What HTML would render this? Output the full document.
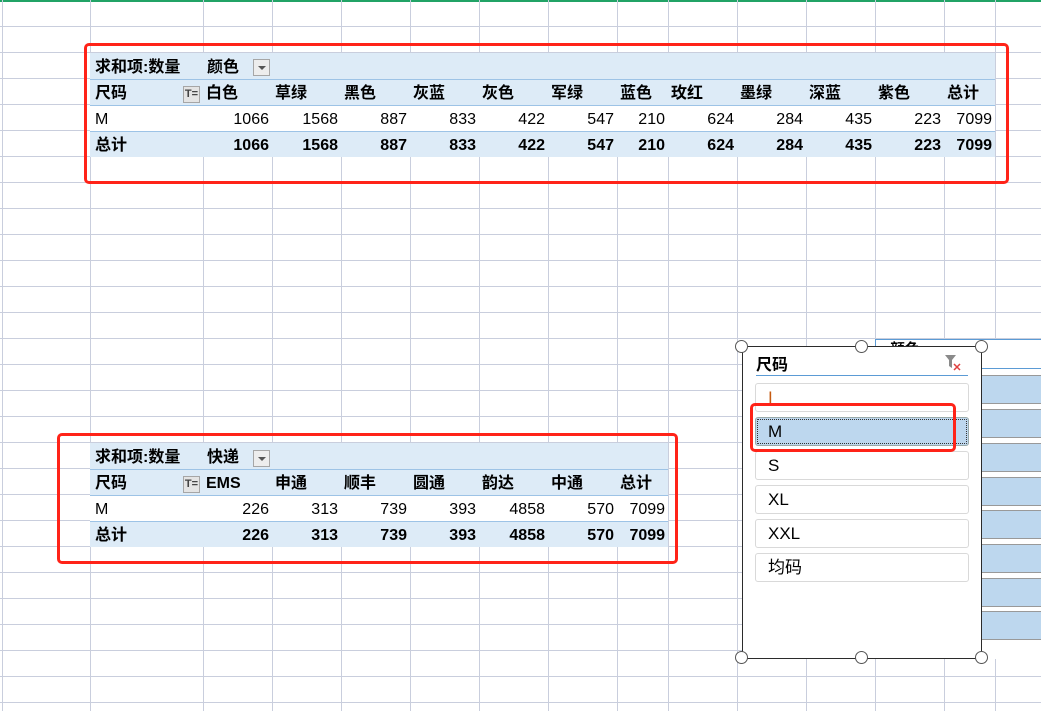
<!DOCTYPE html>
<html><head><meta charset="utf-8"><style>
*{margin:0;padding:0;box-sizing:border-box}
body{width:1041px;height:711px;overflow:hidden;background:#fff;position:relative;font-family:"Liberation Sans","Noto Sans CJK SC",sans-serif;font-size:16px;color:#000}
.v{position:absolute;top:0;height:711px;width:1px;background:#C9CEDD}
.h{position:absolute;left:0;width:1041px;height:1px;background:#C9CEDD}
table{position:absolute;border-collapse:collapse;table-layout:fixed}
td{height:26px;padding:0 3px 1px 3px;white-space:nowrap;overflow:visible;border-bottom:1px solid #9DC3E6;vertical-align:bottom;line-height:20px}
tr.b td{background:#DDEBF7}
tr.w td{background:#fff}
tr.t td{border-bottom:none}
td.r{text-align:right}
.bold td{font-weight:bold}
.dd{position:absolute;width:17px;height:17px;border:1px solid #A6A6A6;background:#EDEDED}
.dd:after{content:"";position:absolute;left:4px;top:6px;border-left:4px solid transparent;border-right:4px solid transparent;border-top:4px solid #555}
.fi{position:absolute;width:17px;height:17px;border:1px solid #A6A6A6;background:#E4E4E4;font-size:11px;font-weight:bold;line-height:15px;text-align:center;color:#444}
.red{position:absolute;border:3px solid #FF2318;border-radius:5px}
.slc{position:absolute;left:742px;top:346px;width:240px;height:313px;border:1.5px solid #2b2b2b;background:#fff}
.it{position:absolute;left:12px;width:214px;height:29px;border:1px solid #D9D9D9;border-radius:3px;font-size:17px;line-height:27px;padding-left:12px;background:#fff}
.hd{position:absolute;width:13px;height:13px;border:1px solid #555;border-radius:50%;background:#fff}
.br{position:absolute;left:981px;width:60px;height:29px;background:#BDD7EE;border-top:1px solid #999;border-bottom:1px solid #999}
</style></head><body>
<div style="position:absolute;left:0;top:0;width:1041px;height:2px;background:#21A366"></div>
<div class="v" style="left:2px"></div><div class="v" style="left:90px"></div><div class="v" style="left:203px"></div><div class="v" style="left:272px"></div><div class="v" style="left:341px"></div><div class="v" style="left:410px"></div><div class="v" style="left:479px"></div><div class="v" style="left:548px"></div><div class="v" style="left:617px"></div><div class="v" style="left:668px"></div><div class="v" style="left:737px"></div><div class="v" style="left:806px"></div><div class="v" style="left:875px"></div><div class="v" style="left:944px"></div><div class="v" style="left:995px"></div>
<div class="h" style="top:26px"></div><div class="h" style="top:52px"></div><div class="h" style="top:78px"></div><div class="h" style="top:104px"></div><div class="h" style="top:130px"></div><div class="h" style="top:156px"></div><div class="h" style="top:182px"></div><div class="h" style="top:208px"></div><div class="h" style="top:234px"></div><div class="h" style="top:260px"></div><div class="h" style="top:286px"></div><div class="h" style="top:312px"></div><div class="h" style="top:338px"></div><div class="h" style="top:364px"></div><div class="h" style="top:390px"></div><div class="h" style="top:416px"></div><div class="h" style="top:442px"></div><div class="h" style="top:468px"></div><div class="h" style="top:494px"></div><div class="h" style="top:520px"></div><div class="h" style="top:546px"></div><div class="h" style="top:572px"></div><div class="h" style="top:598px"></div><div class="h" style="top:624px"></div><div class="h" style="top:650px"></div><div class="h" style="top:676px"></div><div class="h" style="top:702px"></div>

<table style="left:90px;top:53px;width:905px">
<colgroup><col style="width:113px"><col style="width:69px"><col style="width:69px"><col style="width:69px"><col style="width:69px"><col style="width:69px"><col style="width:69px"><col style="width:51px"><col style="width:69px"><col style="width:69px"><col style="width:69px"><col style="width:69px"><col style="width:51px"></colgroup>
<tr class="b bold"><td style="padding-left:5px">求和项:数量</td><td colspan="12" style="padding-left:4px">颜色</td></tr>
<tr class="b bold"><td style="padding-left:5px">尺码</td><td>白色</td><td>草绿</td><td>黑色</td><td>灰蓝</td><td>灰色</td><td>军绿</td><td>蓝色</td><td>玫红</td><td>墨绿</td><td>深蓝</td><td>紫色</td><td>总计</td></tr>
<tr class="w"><td style="padding-left:5px">M</td><td class="r">1066</td><td class="r">1568</td><td class="r">887</td><td class="r">833</td><td class="r">422</td><td class="r">547</td><td class="r">210</td><td class="r">624</td><td class="r">284</td><td class="r">435</td><td class="r">223</td><td class="r">7099</td></tr>
<tr class="b bold t"><td style="padding-left:5px">总计</td><td class="r">1066</td><td class="r">1568</td><td class="r">887</td><td class="r">833</td><td class="r">422</td><td class="r">547</td><td class="r">210</td><td class="r">624</td><td class="r">284</td><td class="r">435</td><td class="r">223</td><td class="r">7099</td></tr>
</table>
<div class="dd" style="left:253px;top:59px"></div>
<div class="fi" style="left:183px;top:86px">T=</div>
<div class="red" style="left:84px;top:43px;width:925px;height:141px"></div>

<table style="left:90px;top:443px;width:578px">
<colgroup><col style="width:113px"><col style="width:69px"><col style="width:69px"><col style="width:69px"><col style="width:69px"><col style="width:69px"><col style="width:69px"><col style="width:51px"></colgroup>
<tr class="b bold"><td style="padding-left:5px">求和项:数量</td><td colspan="7" style="padding-left:4px">快递</td></tr>
<tr class="b bold"><td style="padding-left:5px">尺码</td><td>EMS</td><td>申通</td><td>顺丰</td><td>圆通</td><td>韵达</td><td>中通</td><td>总计</td></tr>
<tr class="w"><td style="padding-left:5px">M</td><td class="r">226</td><td class="r">313</td><td class="r">739</td><td class="r">393</td><td class="r">4858</td><td class="r">570</td><td class="r">7099</td></tr>
<tr class="b bold t"><td style="padding-left:5px">总计</td><td class="r">226</td><td class="r">313</td><td class="r">739</td><td class="r">393</td><td class="r">4858</td><td class="r">570</td><td class="r">7099</td></tr>
</table>
<div class="dd" style="left:253px;top:450px"></div>
<div class="fi" style="left:183px;top:476px">T=</div>
<div class="red" style="left:57px;top:433px;width:621px;height:131px"></div>

<div style="position:absolute;left:875px;top:339px;width:166px;height:320px;border-top:1px solid #5B9BD5;border-left:1px solid #5B9BD5;background:#fff"></div>
<div style="position:absolute;left:890px;top:340px;font-size:15px;font-weight:bold;height:8px;overflow:hidden;line-height:20px">颜色</div>
<div style="position:absolute;left:981px;top:368px;width:60px;height:1px;background:#5B9BD5"></div>
<div class="br" style="top:375px"></div><div class="br" style="top:409px"></div><div class="br" style="top:443px"></div><div class="br" style="top:477px"></div><div class="br" style="top:510px"></div><div class="br" style="top:544px"></div><div class="br" style="top:578px"></div><div class="br" style="top:611px"></div>

<div class="slc">
<div style="position:absolute;left:13px;top:4px;font-size:16px;font-weight:bold">尺码</div>
<svg style="position:absolute;left:200px;top:5px" width="20" height="20" viewBox="0 0 20 20"><path d="M2 3h11l-4 5v8l-3-2V8z" fill="#8a8a8a"/><path d="M11 12l6 6M17 12l-6 6" stroke="#e04040" stroke-width="1.5"/></svg>
<div style="position:absolute;left:13px;top:28px;width:212px;height:1px;background:#5B9BD5"></div>
<div class="it" style="top:36px;color:#C55A11">I</div>
<div class="it" style="top:70px;background:#BDD7EE;border-color:#9AA;outline:1px dotted #333;outline-offset:-3px">M</div>
<div class="it" style="top:104px">S</div>
<div class="it" style="top:138px">XL</div>
<div class="it" style="top:172px">XXL</div>
<div class="it" style="top:206px">均码</div>
</div>
<div class="hd" style="left:735px;top:340px"></div><div class="hd" style="left:855px;top:340px"></div><div class="hd" style="left:975px;top:340px"></div>
<div class="hd" style="left:735px;top:651px"></div><div class="hd" style="left:855px;top:651px"></div><div class="hd" style="left:975px;top:651px"></div>
<div class="red" style="left:750px;top:403px;width:206px;height:49px"></div>
</body></html>
